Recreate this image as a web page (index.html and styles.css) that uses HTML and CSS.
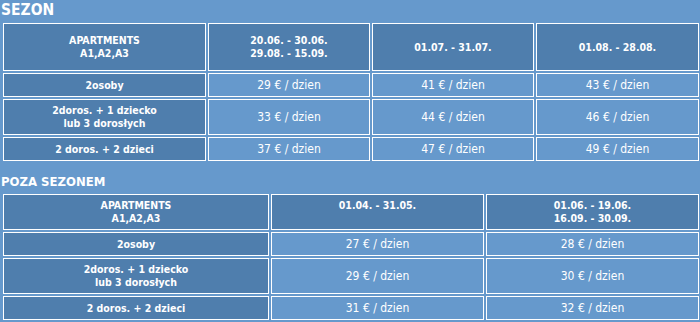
FILE: index.html
```html
<!DOCTYPE html>
<html lang="pl">
<head>
<meta charset="utf-8">
<title>Cennik</title>
<link rel="stylesheet" href="styles.css">
</head>
<body>
<div class="title title-main">SEZON</div>
<table class="prices">
  <colgroup>
    <col class="c-label-4"><col class="c-val-4"><col class="c-val-4"><col class="c-val-4b">
  </colgroup>
  <tr class="h48">
    <th class="dark">APARTMENTS<br>A1,A2,A3</th>
    <th class="dark">20.06. - 30.06.<br>29.08. - 15.09.</th>
    <th class="dark">01.07. - 31.07.</th>
    <th class="dark">01.08. - 28.08.</th>
  </tr>
  <tr class="h24">
    <th class="dark">2osoby</th>
    <td>29 € / dzien</td><td>41 € / dzien</td><td>43 € / dzien</td>
  </tr>
  <tr class="h36">
    <th class="dark">2doros. + 1 dziecko<br>lub 3 dorosłych</th>
    <td>33 € / dzien</td><td>44 € / dzien</td><td>46 € / dzien</td>
  </tr>
  <tr class="h24">
    <th class="dark">2 doros. + 2 dzieci</th>
    <td>37 € / dzien</td><td>47 € / dzien</td><td>49 € / dzien</td>
  </tr>
</table>
<div class="title title-sub">POZA SEZONEM</div>
<table class="prices">
  <colgroup>
    <col class="c-label-3"><col class="c-val-3"><col class="c-val-3">
  </colgroup>
  <tr class="h36">
    <th class="dark">APARTMENTS<br>A1,A2,A3</th>
    <th class="dark">01.04. - 31.05.<br>&nbsp;</th>
    <th class="dark">01.06. - 19.06.<br>16.09. - 30.09.</th>
  </tr>
  <tr class="h24">
    <th class="dark">2osoby</th>
    <td>27 € / dzien</td><td>28 € / dzien</td>
  </tr>
  <tr class="h36">
    <th class="dark">2doros. + 1 dziecko<br>lub 3 dorosłych</th>
    <td>29 € / dzien</td><td>30 € / dzien</td>
  </tr>
  <tr class="h24">
    <th class="dark">2 doros. + 2 dzieci</th>
    <td>31 € / dzien</td><td>32 € / dzien</td>
  </tr>
</table>
</body>
</html>
```
FILE: styles.css
```css
html, body {
  margin: 0;
  padding: 0;
  overflow: hidden;
}
body {
  background: #6699cc;
  color: #ffffff;
  font-family: "DejaVu Sans Condensed", "DejaVu Sans", sans-serif;
  font-stretch: condensed;
}
.title {
  font-weight: bold;
  padding-left: 1px;
}
.title-main {
  font-size: 15.5px;
  line-height: 21px;
  height: 21px;
}
.title-sub {
  font-size: 13px;
  line-height: 20px;
  padding-top: 9px;
  height: 20px;
}
.prices {
  table-layout: fixed;
  border-collapse: separate;
  border-spacing: 2px;
  width: 700px;
  margin-left: 1px;
}
.c-label-4 { width: 203px; }
.c-val-4 { width: 162px; }
.c-val-4b { width: 163px; }
.c-label-3 { width: 266px; }
.c-val-3 { width: 213px; }
.prices th,
.prices td {
  border: 1px solid #ffffff;
  padding: 0;
  text-align: center;
  vertical-align: middle;
  line-height: 13px;
}
.prices th {
  font-size: 10.5px;
  font-weight: bold;
}
.prices td {
  font-size: 12px;
  font-weight: normal;
  background: #6699cc;
}
.prices .dark {
  background: #4f7ead;
}
.h48 { height: 48px; }
.h36 { height: 36px; }
.h24 { height: 24px; }
```
